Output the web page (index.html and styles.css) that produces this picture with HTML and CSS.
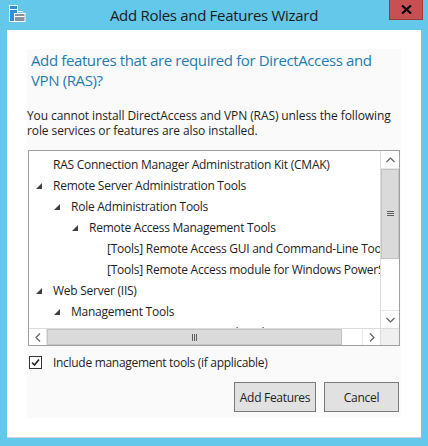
FILE: index.html
```html
<!DOCTYPE html>
<html>
<head>
<meta charset="utf-8">
<link rel="stylesheet" href="styles.css">
</head>
<body>
<div class="window">
  <div class="titlebar">
    <svg class="app-icon" width="18" height="18" viewBox="0 0 18 18">
      <rect x="1.5" y="0.5" width="8" height="16" fill="#2f8fd8" stroke="#ffffff" stroke-width="1"/>
      <line x1="2" y1="4.5" x2="9" y2="4.5" stroke="#ffffff" stroke-width="1"/>
      <rect x="6.5" y="8.5" width="10.5" height="8" fill="#8a94a0" stroke="#ffffff" stroke-width="1"/>
      <rect x="9.5" y="6.5" width="4.5" height="2" fill="none" stroke="#ffffff" stroke-width="1"/>
      <line x1="7" y1="11.5" x2="16.5" y2="11.5" stroke="#ffffff" stroke-width="1"/>
    </svg>
    <div class="title">Add Roles and Features Wizard</div>
    <div class="close">
      <svg width="11" height="9" viewBox="0 0 11 9">
        <path d="M1 0.5 L10 8.5 M10 0.5 L1 8.5" stroke="#000" stroke-width="2.2"/>
      </svg>
    </div>
  </div>
  <div class="client">
    <div class="panel">
      <h1 class="heading">Add features that are required for DirectAccess and VPN (RAS)?</h1>
      <p class="desc">You cannot install DirectAccess and VPN (RAS) unless the following role services or features are also installed.</p>
      <div class="listbox">
        <div class="tree">
          <div class="row lvl0"><span class="exp none"></span><span class="label">RAS Connection Manager Administration Kit (CMAK)</span></div>
          <div class="row lvl0"><span class="exp"></span><span class="label">Remote Server Administration Tools</span></div>
          <div class="row lvl1"><span class="exp"></span><span class="label">Role Administration Tools</span></div>
          <div class="row lvl2"><span class="exp"></span><span class="label">Remote Access Management Tools</span></div>
          <div class="row lvl3"><span class="exp none"></span><span class="label">[Tools] Remote Access GUI and Command-Line Tools</span></div>
          <div class="row lvl3"><span class="exp none"></span><span class="label">[Tools] Remote Access module for Windows PowerShell</span></div>
          <div class="row lvl0"><span class="exp"></span><span class="label">Web Server (IIS)</span></div>
          <div class="row lvl1"><span class="exp"></span><span class="label">Management Tools</span></div>
          <div class="row lvl2"><span class="exp none"></span><span class="label">IIS Management Scripts and Tools</span></div>
        </div>
        <div class="vscroll">
          <div class="sbtn">
            <svg width="9" height="6" viewBox="0 0 9 6"><path d="M0.5 5 L4.5 1 L8.5 5" fill="none" stroke="#606060" stroke-width="1.2"/></svg>
          </div>
          <div class="vthumb">
            <svg width="7" height="6" viewBox="0 0 7 6"><path d="M0 0.5 H7 M0 2.5 H7 M0 4.5 H7" stroke="#606060" stroke-width="1"/></svg>
          </div>
          <div class="vtrack"></div>
          <div class="sbtn sbtn-last">
            <svg width="9" height="6" viewBox="0 0 9 6"><path d="M0.5 1 L4.5 5 L8.5 1" fill="none" stroke="#606060" stroke-width="1.2"/></svg>
          </div>
        </div>
        <div class="hscroll">
          <div class="sbtn">
            <svg width="6" height="9" viewBox="0 0 6 9"><path d="M5 0.5 L1 4.5 L5 8.5" fill="none" stroke="#606060" stroke-width="1.2"/></svg>
          </div>
          <div class="hthumb">
            <svg width="6" height="7" viewBox="0 0 6 7"><path d="M0.5 0 V7 M2.5 0 V7 M4.5 0 V7" stroke="#606060" stroke-width="1"/></svg>
          </div>
          <div class="htrack"></div>
          <div class="sbtn sbtn-last">
            <svg width="6" height="9" viewBox="0 0 6 9"><path d="M1 0.5 L5 4.5 L1 8.5" fill="none" stroke="#606060" stroke-width="1.2"/></svg>
          </div>
        </div>
        <div class="corner"></div>
      </div>
      <label class="check">
        <span class="box">
          <svg width="11" height="11" viewBox="0 0 11 11"><path d="M2 5.5 L4.5 8 L9 2.5" fill="none" stroke="#222" stroke-width="1.6"/></svg>
        </span>
        <span>Include management tools (if applicable)</span>
      </label>
      <div class="buttons">
        <button class="btn btn-add">Add Features</button>
        <button class="btn btn-cancel">Cancel</button>
      </div>
    </div>
  </div>
</div>
</body>
</html>
```
FILE: styles.css
```css
* { box-sizing: border-box; }
html, body {
  margin: 0;
  padding: 0;
  background: #63c8ea;
  width: 428px;
  height: 446px;
  overflow: hidden;
}
body {
  font-family: "Open Sans", "Noto Sans", sans-serif;
  color: #1e1e1e;
}
.window {
  width: 428px;
  height: 446px;
  display: flex;
  flex-direction: column;
}
.titlebar {
  height: 30px;
  display: flex;
  align-items: flex-start;
  position: relative;
}
.app-icon {
  margin: 5px 0 0 8px;
}
.title {
  position: absolute;
  left: 0;
  right: 0;
  top: 5px;
  text-align: center;
  font-size: 15px;
  line-height: 20px;
  color: #1c1c1c;
  letter-spacing: -0.3px;
}
.close {
  position: absolute;
  top: 0;
  left: 389px;
  width: 34px;
  height: 20px;
  background: #c75050;
  border: 1px solid #9c3a3a;
  border-top: none;
  display: flex;
  align-items: center;
  justify-content: center;
}
.client {
  margin: 0 7px;
  height: 408px;
  background: #ffffff;
  border-bottom: 1px solid #d4d4d4;
  padding: 19px 20px 19px 20px;
}
.panel {
  height: 369px;
  background: #fafafa;
  padding: 1px 1px 0 1px;
  display: flex;
  flex-direction: column;
}
.heading {
  margin: 0;
  padding-left: 3px;
  font-weight: normal;
  font-size: 15px;
  line-height: 20px;
  color: #1f7cb0;
  letter-spacing: -0.38px;
}
.desc {
  margin: 18px 0 0 -1px;
  max-width: 366px;
  font-size: 12px;
  line-height: 15px;
  letter-spacing: -0.1px;
  color: #1e1e1e;
}
.listbox {
  margin-top: 12px;
  width: 372px;
  height: 196px;
  border: 1px solid #a0a0a0;
  background: #ffffff;
  display: grid;
  grid-template-columns: 1fr 19px;
  grid-template-rows: 1fr 17px;
}
.tree {
  overflow: hidden;
  padding-top: 3px;
  font-size: 12px;
  letter-spacing: -0.25px;
}
.row {
  height: 21px;
  display: flex;
  align-items: center;
  white-space: nowrap;
}
.lvl0 { padding-left: 6px; }
.lvl1 { padding-left: 24px; }
.lvl2 { padding-left: 42px; }
.lvl3 { padding-left: 60px; }
.exp {
  flex: 0 0 18px;
  height: 21px;
  position: relative;
}
.exp::before {
  content: "";
  position: absolute;
  left: 1px;
  top: 8px;
  width: 6px;
  height: 6px;
  background: #404040;
  clip-path: polygon(100% 0, 100% 100%, 0 100%);
}
.exp.none::before { display: none; }
.vscroll {
  border-left: 1px solid #dcdcdc;
  display: flex;
  flex-direction: column;
  background: #ffffff;
}
.vscroll .sbtn {
  height: 18px;
  display: flex;
  align-items: center;
  justify-content: center;
  border-bottom: 1px solid #e6e6e6;
}
.vscroll .sbtn-last {
  border-bottom: none;
  border-top: 1px solid #e6e6e6;
}
.vthumb {
  height: 90px;
  background: #dadada;
  border: 1px solid #c4c4c4;
  display: flex;
  align-items: center;
  justify-content: center;
}
.vtrack { flex: 1; }
.hscroll {
  border-top: 1px solid #dcdcdc;
  display: flex;
  background: #ffffff;
}
.hscroll .sbtn {
  width: 18px;
  display: flex;
  align-items: center;
  justify-content: center;
  border-right: 1px solid #e6e6e6;
}
.hscroll .sbtn-last {
  border-right: none;
  border-left: 1px solid #e6e6e6;
}
.hthumb {
  width: 295px;
  background: #dadada;
  border: 1px solid #c4c4c4;
  display: flex;
  align-items: center;
  justify-content: center;
}
.htrack { flex: 1; }
.corner {
  background: #f0f0f0;
  border-left: 1px solid #dcdcdc;
  border-top: 1px solid #dcdcdc;
}
.check {
  margin-top: 10px;
  margin-left: 1px;
  display: flex;
  align-items: center;
  height: 13px;
  font-size: 12px;
  letter-spacing: -0.3px;
  color: #1e1e1e;
}
.box {
  width: 13px;
  height: 13px;
  border: 1px solid #333333;
  background: #ffffff;
  display: flex;
  align-items: center;
  justify-content: center;
  margin-right: 11px;
}
.buttons {
  margin-top: 13px;
  display: flex;
  justify-content: flex-end;
  gap: 8px;
  padding-right: 1px;
}
.btn {
  height: 30px;
  background: #e1e1e1;
  border: 1px solid #7a7a7a;
  font-family: "Open Sans", "Noto Sans", sans-serif;
  font-size: 12px;
  letter-spacing: -0.3px;
  color: #1e1e1e;
  padding: 0;
}
.btn-add { width: 82px; }
.btn-cancel { width: 75px; }
```
